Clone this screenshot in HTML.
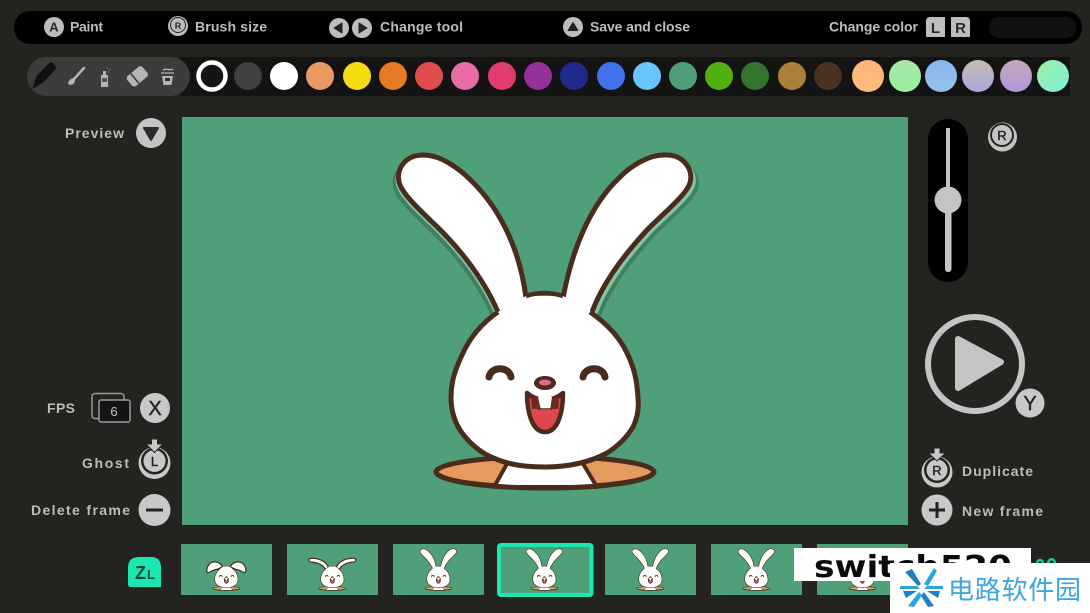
<!DOCTYPE html>
<html><head><meta charset="utf-8"><style>
html,body{margin:0;padding:0;background:#232320}
body{width:1090px;height:613px;overflow:hidden;position:relative}
svg{position:absolute;left:0;top:0}
text{font-family:"Liberation Sans","Noto Sans CJK SC",sans-serif}
.t{font-size:14px;font-weight:700;fill:#bcbcbc}
.g{font-size:13px;font-weight:700;fill:#2a2a2a;text-anchor:middle}
.k{fill:#222;text-anchor:middle;stroke:#222;stroke-width:.4}
</style></head><body>
<svg width="1090" height="613" viewBox="0 0 1090 613" xmlns="http://www.w3.org/2000/svg">
<defs>
<linearGradient id="g1" x1="0" y1="0" x2="0" y2="1"><stop offset="0" stop-color="#ffb27c"/><stop offset="1" stop-color="#ffbe7c"/></linearGradient>
<linearGradient id="g2" x1="0" y1="0" x2="0" y2="1"><stop offset="0" stop-color="#a8e8a8"/><stop offset="1" stop-color="#98eea0"/></linearGradient>
<linearGradient id="g3" x1="0" y1="0" x2="0" y2="1"><stop offset="0" stop-color="#8cb8ee"/><stop offset="1" stop-color="#94c0ea"/></linearGradient>
<linearGradient id="g4" x1="0" y1="0" x2="0" y2="1"><stop offset="0" stop-color="#c8bcb0"/><stop offset="1" stop-color="#a8a8dc"/></linearGradient>
<linearGradient id="g5" x1="0" y1="0" x2="0" y2="1"><stop offset="0" stop-color="#c4a8b8"/><stop offset="1" stop-color="#b098dc"/></linearGradient>
<linearGradient id="g6" x1="0" y1="0" x2="1" y2="1"><stop offset="0" stop-color="#9cf0a8"/><stop offset="1" stop-color="#7ef0d8"/></linearGradient>

<path id="earL" d="M526 298C520 250 500 205 463 173C448 161 436 155 423 155C406 155 396 168 399 182C402 194 420 210 430 220C455 243 482 275 498 312"/>
<path id="earR" d="M592 312C602 285 622 257 647 230C665 212 686 195 690 183C694 168 682 155 667 155C650 154 632 165 620 177C590 205 572 250 563 298"/>

<g id="body">
<ellipse cx="545" cy="472" rx="109" ry="15.500" fill="#e59a5e" stroke="#4a2c1c" stroke-width="5"/>
<path d="M508 462L582 462L597 487L494 487Z" fill="#fff" stroke="#4a2c1c" stroke-width="4" stroke-linejoin="round"/>
<path d="M436 472C440 482 490 488 545 488C600 488 650 482 654 472" fill="none" stroke="#4a2c1c" stroke-width="5"/>
</g>
<g id="headG">
<path d="M498 312L526 296L563 296L592 312L592 330L498 330Z" fill="#fff"/>
<path d="M498 312C482 323 470 337 462 355C455 370 451 382 451 397C451 412 455 422 460 430C468 442 478 450 487 455C503 463 518 467 545 467C572 467 592 461 607 453C618 446 627 437 633 427C638 417 639 408 638 398C637 380 634 367 627 353C619 336 606 323 590 312" fill="#fff" stroke="#4a2c1c" stroke-width="5"/>
<path d="M526 296C538 292 550 292 563 296" fill="none" stroke="#4a2c1c" stroke-width="4.500"/>
</g>
<g id="face">
<path d="M489 377C491 366 509 366 511 377M583 377C585 366 603 366 605 377" fill="none" stroke="#4a2c1c" stroke-width="7" stroke-linecap="round"/>
<ellipse cx="545" cy="383" rx="11" ry="7" fill="#4a2c1c"/><ellipse cx="545" cy="382.500" rx="6" ry="3" fill="#d9698c"/>
<path d="M527 393C533 398 539 400 545 400C551 400 557 398 563 393C563 412 558 432 545 432C532 432 527 412 527 393Z" fill="#e0474c" stroke="#4a2c1c" stroke-width="4.500" stroke-linejoin="round"/>
<path d="M531 398L559 398L558 409L532 409Z" fill="#6a2c24"/>
<path d="M538 397H552L550 410H541Z" fill="#fff"/>
<path d="M538 409H552" stroke="#4a2c1c" stroke-width="1.500"/>
</g>
<g id="earsG" fill="#fff" stroke="#4a2c1c" stroke-width="5" stroke-linejoin="round"><use href="#earL"/><use href="#earR"/></g>

<g id="rabMain"><use href="#body"/><use href="#earsG"/><use href="#headG"/><use href="#face"/></g>
<g id="rab1"><use href="#body"/>
<path d="M515 300C495 262 455 250 420 268C395 285 382 325 392 345C405 355 425 325 470 320ZM575 300C595 262 635 250 670 268C695 285 708 325 698 345C685 355 665 325 620 320Z" fill="#fff" stroke="#4a2c1c" stroke-width="10" stroke-linejoin="round"/>
<use href="#headG"/><use href="#face"/></g>
<g id="rab2"><use href="#body"/>
<path d="M512 300C490 250 420 225 370 232C352 236 352 255 372 262C430 262 480 290 495 330ZM578 300C600 250 670 225 720 232C738 236 738 255 718 262C660 262 610 290 595 330Z" fill="#fff" stroke="#4a2c1c" stroke-width="10" stroke-linejoin="round"/>
<use href="#headG"/><use href="#face"/></g>
</defs>

<!-- top bar -->
<rect x="14" y="11" width="1068" height="33" rx="16" fill="#000"/>
<rect x="989" y="17" width="87" height="21" rx="10" fill="#111"/>
<circle cx="54" cy="27" r="10" fill="#bdbdbd"/><text x="54" y="31.500" class="g">A</text>
<text x="70" y="31.500" class="t" textLength="33">Paint</text>
<circle cx="178" cy="26" r="10" fill="#bdbdbd"/><circle cx="178" cy="25" r="7.500" fill="#bdbdbd" stroke="#222" stroke-width="1"/><text x="178" y="29" class="g" style="font-size:9px">R</text>
<text x="195" y="31.500" class="t" textLength="72">Brush size</text>
<circle cx="339" cy="28" r="10" fill="#bdbdbd"/><path d="M334 28L342 23V33Z" fill="#222" stroke="#222" stroke-linejoin="round"/>
<circle cx="362" cy="28" r="10" fill="#bdbdbd"/><path d="M367 28L359 23V33Z" fill="#222" stroke="#222" stroke-linejoin="round"/>
<text x="380" y="31.500" class="t" textLength="83">Change tool</text>
<circle cx="573" cy="27" r="10" fill="#bdbdbd"/><path d="M573 22.500L578 30.500H568Z" fill="#222" stroke="#222" stroke-linejoin="round"/>
<text x="590" y="31.500" class="t" textLength="100">Save and close</text>
<text x="829" y="31.500" class="t" textLength="89">Change color</text>
<path d="M926 21a4 4 0 0 1 4-4h15v20h-19Z" fill="#bdbdbd"/><text x="935.500" y="33" class="g" style="font-size:15px">L</text>
<path d="M951 17h15a4 4 0 0 1 4 4v16h-19Z" fill="#bdbdbd"/><text x="960.500" y="33" class="g" style="font-size:15px">R</text>

<!-- palette -->
<rect x="180" y="57" width="890" height="39" fill="#131313"/>
<rect x="27" y="57" width="163" height="39" rx="19.500" fill="#3c3c3c"/>
<!-- tools -->
<path d="M33 88L37 76L50 63C52 62 55 65 56 68L43 82Z" fill="#111" stroke="#111" stroke-width="1" stroke-linejoin="round"/>
<path d="M84 68L74 79" stroke="#b5b5b5" stroke-width="2.500" stroke-linecap="round"/><path d="M68 84C68 80 72 78 74 78C76 80 75 84 71 85Z" fill="#b5b5b5"/>
<rect x="101" y="75" width="7" height="12" fill="#b5b5b5"/><rect x="102" y="78" width="5" height="4" fill="#555"/><rect x="103" y="71" width="3" height="4" fill="#b5b5b5"/><path d="M107 68h1M109 70h1M108 72h1" stroke="#999" stroke-width="1"/>
<g transform="rotate(-40 137 76)"><rect x="127" y="70" width="20" height="13" rx="3" fill="#b5b5b5"/><rect x="133" y="70" width="1.500" height="13" fill="#333"/></g>
<path d="M162 76H173L171.500 85H163.500Z" fill="#b5b5b5"/><path d="M161 73H174M163 70C167 68 169 71 173 69" stroke="#b5b5b5" stroke-width="1.300" fill="none"/><rect x="165" y="78" width="5" height="3" fill="#333"/>
<!-- swatches -->
<circle cx="212" cy="76" r="13.500" fill="#141414" stroke="#fff" stroke-width="4.500"/>
<circle cx="248" cy="76" r="14" fill="#404040"/>
<circle cx="284" cy="76" r="14" fill="#fff"/>
<circle cx="320" cy="76" r="14" fill="#e89a62"/>
<circle cx="357" cy="76" r="14" fill="#f5dc10"/>
<circle cx="393" cy="76" r="14" fill="#e57a22"/>
<circle cx="429" cy="76" r="14" fill="#e04b4b"/>
<circle cx="465" cy="76" r="14" fill="#e86ca8"/>
<circle cx="502" cy="76" r="14" fill="#e03c6e"/>
<circle cx="538" cy="76" r="14" fill="#943098"/>
<circle cx="574" cy="76" r="14" fill="#1f2a8c"/>
<circle cx="611" cy="76" r="14" fill="#4272ea"/>
<circle cx="647" cy="76" r="14" fill="#68c4fa"/>
<circle cx="683" cy="76" r="14" fill="#4fa078"/>
<circle cx="719" cy="76" r="14" fill="#52b00e"/>
<circle cx="755" cy="76" r="14" fill="#357430"/>
<circle cx="792" cy="76" r="14" fill="#ab8038"/>
<circle cx="828" cy="76" r="14" fill="#4a3220"/>
<circle cx="868" cy="76" r="16" fill="url(#g1)"/>
<circle cx="905" cy="76" r="16" fill="url(#g2)"/>
<circle cx="941" cy="76" r="16" fill="url(#g3)"/>
<circle cx="978" cy="76" r="16" fill="url(#g4)"/>
<circle cx="1016" cy="76" r="16" fill="url(#g5)"/>
<circle cx="1053" cy="76" r="16" fill="url(#g6)"/>

<!-- canvas -->
<rect x="182" y="117" width="726" height="408" fill="#4fa078"/>
<use href="#earL" transform="translate(-6 6)" fill="#3f7f62"/>
<use href="#earR" transform="translate(8 6)" fill="#3f7f62"/>
<use href="#earL" transform="translate(-3 3)" fill="#86c4a6"/>
<use href="#earR" transform="translate(5 3)" fill="#86c4a6"/>
<use href="#rabMain"/>

<!-- left controls -->
<text x="65" y="138" class="t" textLength="59">Preview</text>
<circle cx="151" cy="133" r="15" fill="#c4c4c4"/><path d="M144 128H158L151 140Z" fill="#2b2b2b" stroke="#2b2b2b" stroke-width="2" stroke-linejoin="round"/>
<text x="47" y="413" class="t" textLength="28">FPS</text>
<rect x="92" y="393.500" width="32" height="25" rx="3" fill="#232320" stroke="#9a9a9a" stroke-width="1.500"/>
<rect x="99" y="400" width="31" height="22" rx="2" fill="#141414" stroke="#9a9a9a" stroke-width="1.500"/>
<text x="114" y="416" style="font-size:13px;font-weight:400;fill:#c4c4c4;text-anchor:middle">6</text>
<circle cx="155" cy="408" r="15" fill="#c8c8c8"/><text x="155" y="415" class="k" style="font-size:20px">X</text>
<text x="82" y="468" class="t" textLength="47">Ghost</text>
<circle cx="154.500" cy="463" r="16" fill="#c8c8c8"/><circle cx="154.500" cy="461" r="13.500" fill="#232320"/><circle cx="154.500" cy="461" r="11" fill="#c8c8c8"/><text x="154.500" y="466" class="k" style="font-size:13px">L</text>
<path d="M151.500 439H157.500V444H163L154.500 452.500L146 444H151.500Z" fill="#c8c8c8" stroke="#232320" stroke-width="1"/>
<text x="31" y="515" class="t" textLength="99">Delete frame</text>
<circle cx="154.500" cy="510" r="16" fill="#c8c8c8"/><rect x="146" y="508.500" width="17" height="3" fill="#222"/>
<path d="M128 584V568C128 560 132 557 140 557H151C158 557 161 561 161 568V587L131 587C129 587 128 586 128 584Z" fill="#1be8b0"/>
<text x="135" y="579" style="font-size:18px;font-weight:700;fill:#0e4a3a">Z</text><text x="147" y="579" style="font-size:13px;font-weight:700;fill:#0e4a3a">L</text>

<!-- right controls -->
<rect x="928" y="119" width="40" height="163" rx="20" fill="#000"/>
<rect x="946" y="128" width="4" height="66" fill="#c4c4c4"/>
<rect x="945" y="205" width="6.500" height="67" rx="3" fill="#c4c4c4"/>
<circle cx="948" cy="200" r="13.500" fill="#c4c4c4"/>
<circle cx="1002.500" cy="137" r="14.500" fill="#c4c4c4"/><circle cx="1002" cy="135" r="12" fill="#232320"/><circle cx="1002" cy="135" r="10" fill="#c4c4c4"/><text x="1002" y="140" class="k" style="font-size:13px">R</text>
<circle cx="975" cy="364" r="47" fill="none" stroke="#c4c4c4" stroke-width="6"/>
<path d="M958 339L1001 362L958 388Z" fill="#c4c4c4" stroke="#c4c4c4" stroke-width="6" stroke-linejoin="round"/>
<circle cx="1030" cy="403" r="14.500" fill="#c8c8c8"/><text x="1030" y="410" class="k" style="font-size:20px">Y</text>
<circle cx="937" cy="472" r="15.500" fill="#c8c8c8"/><circle cx="937" cy="470" r="13" fill="#232320"/><circle cx="937" cy="470" r="10.500" fill="#c8c8c8"/><text x="937" y="475" class="k" style="font-size:13px">R</text>
<path d="M934 448H940V453H945.500L937 461L928.500 453H934Z" fill="#c8c8c8" stroke="#232320" stroke-width="1"/>
<text x="962" y="476" class="t" textLength="71">Duplicate</text>
<circle cx="937" cy="510" r="15.500" fill="#c8c8c8"/><path d="M929 510H945M937 502V518" stroke="#222" stroke-width="3"/>
<text x="962" y="516" class="t" textLength="81">New frame</text>

<!-- thumbs -->
<rect x="181" y="544" width="91" height="51" fill="#4fa078"/>
<rect x="287" y="544" width="91" height="51" fill="#4fa078"/>
<rect x="393" y="544" width="91" height="51" fill="#4fa078"/>
<rect x="605" y="544" width="91" height="51" fill="#4fa078"/>
<rect x="711" y="544" width="91" height="51" fill="#4fa078"/>
<rect x="817" y="544" width="91" height="51" fill="#4fa078"/>
<rect x="499" y="545" width="92.500" height="50" rx="2" fill="#4fa078" stroke="#1be8b0" stroke-width="4"/>
<g transform="translate(181 544) scale(.125) translate(-182 -117)"><use href="#rab1"/></g>
<g transform="translate(287 544) scale(.125) translate(-182 -117)"><use href="#rab2"/></g>
<g transform="translate(393 544) scale(.125) translate(-182 -117)"><use href="#rabMain"/></g>
<g transform="translate(499 544) scale(.125) translate(-182 -117)"><use href="#rabMain"/></g>
<g transform="translate(605 544) scale(.125) translate(-182 -117)"><use href="#rabMain"/></g>
<g transform="translate(711 544) scale(.125) translate(-182 -117)"><use href="#rabMain"/></g>
<g transform="translate(817 544) scale(.125) translate(-182 -117)"><use href="#rabMain"/></g>

<!-- page indicator peek -->
<path d="M1037 563C1038 559 1042 559 1043 563M1048 563C1049 558 1054 558 1055 563" fill="none" stroke="#1bc89a" stroke-width="2.500"/>

<!-- watermark -->
<rect x="794" y="548" width="237" height="33" fill="#fff"/>
<text x="814" y="577" style="font-family:'DejaVu Sans',sans-serif;font-size:30px;font-weight:700;fill:#0a0a0a;" textLength="198" lengthAdjust="spacingAndGlyphs">switch520</text>
<rect x="890" y="563" width="200" height="50" fill="#fff"/>
<g>
<path d="M900 586H917L920 589H900Z" fill="#2aa5e0"/>
<path d="M924 589L927 586H943V589Z" fill="#2aa5e0"/>
<path d="M903 591H917L906 598Z" fill="#1f7fc4"/>
<path d="M927 591H940L938 598Z" fill="#1f7fc4"/>
<path d="M905 572L912 569L921 584L918 586Z" fill="#1f7fc4"/>
<path d="M924 584L934 568L937 571L928 586Z" fill="#2aa5e0"/>
<path d="M919 592L922 595L914 607L908 606Z" fill="#2aa5e0"/>
<path d="M924 592L934 606L928 607L921 596Z" fill="#1f7fc4"/>
</g>
<text x="948" y="599" style="font-size:26px;fill:#3aa5e0;font-family:'Liberation Sans','Noto Sans CJK SC',sans-serif" textLength="133" lengthAdjust="spacing">电路软件园</text>
</svg>
</body></html>
